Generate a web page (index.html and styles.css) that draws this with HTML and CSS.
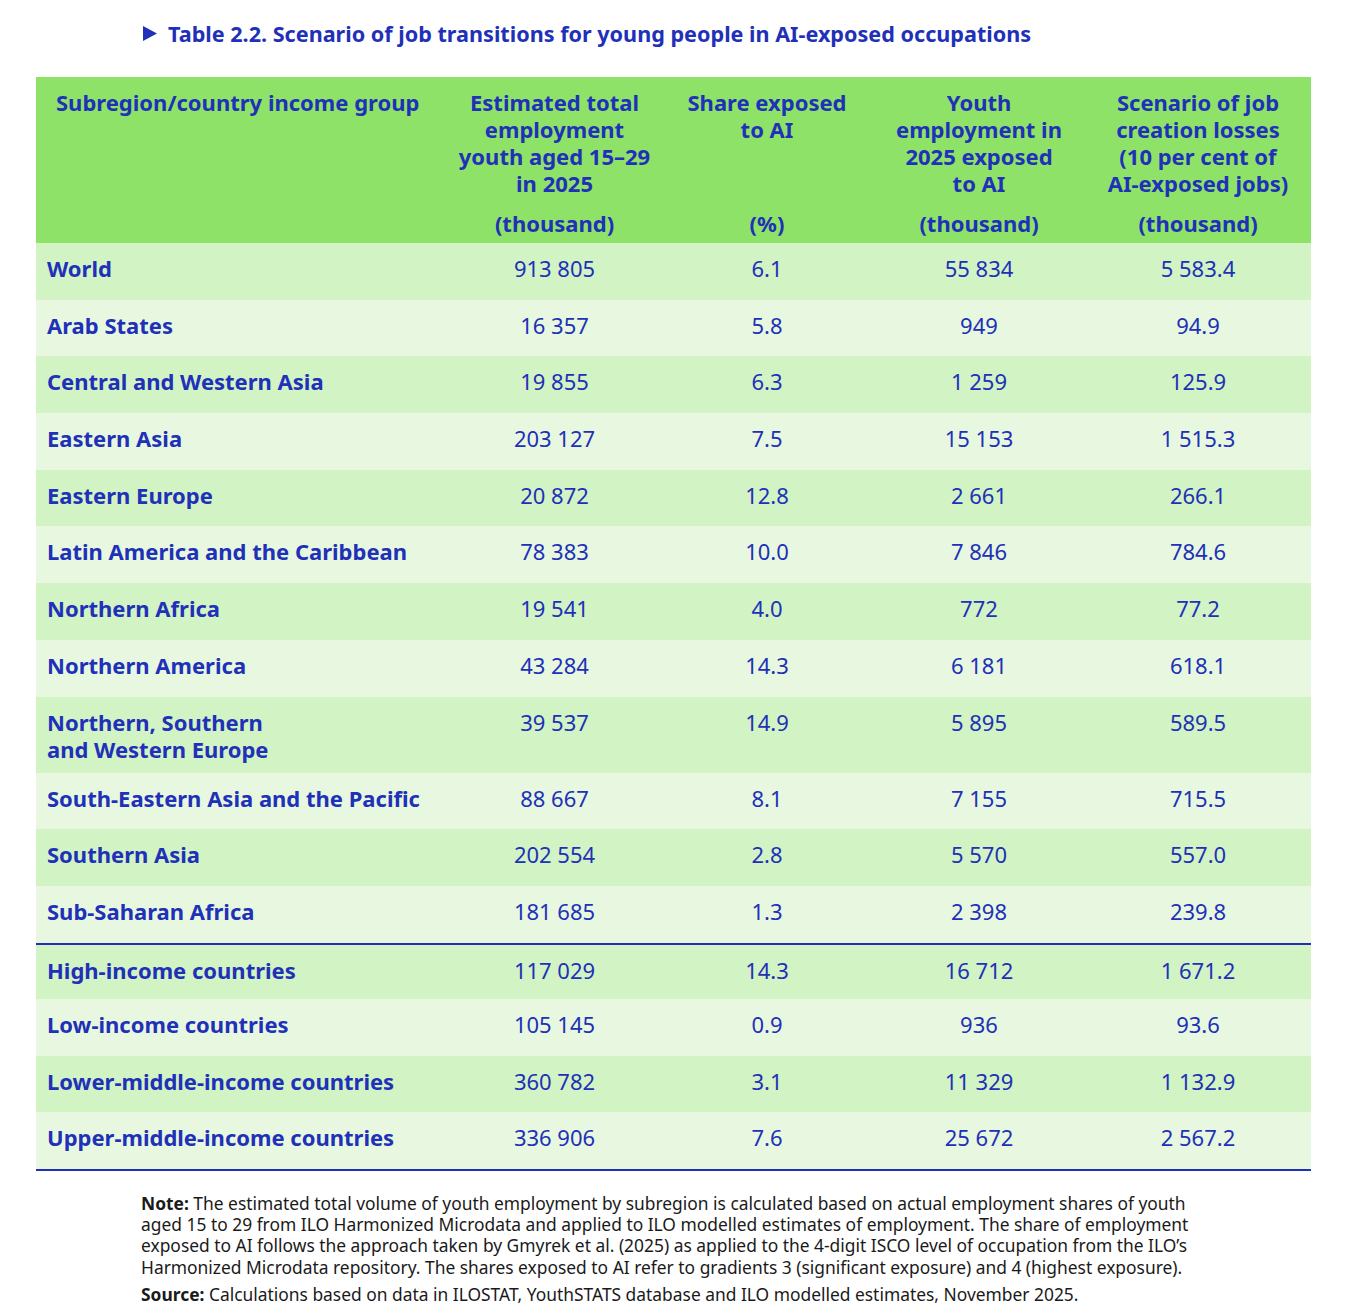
FILE: index.html
```html
<!DOCTYPE html>
<html lang="en">
<head>
<meta charset="utf-8">
<title>Table 2.2</title>
<link rel="stylesheet" href="styles.css">
</head>
<body>
<div class="page">
  <h1 class="title"><svg class="tri" width="14" height="15" viewBox="0 0 14 15"><polygon points="0,0 14,7.5 0,15" fill="#2130b8"/></svg>Table 2.2. Scenario of job transitions for young people in AI-exposed occupations</h1>
  <table class="data">
    <colgroup>
      <col class="c1"><col class="c2"><col class="c3"><col class="c4"><col class="c5">
    </colgroup>
    <thead>
      <tr>
        <th class="lab"><div class="hmain">Subregion/country income group</div></th>
        <th><div class="hmain">Estimated total<br>employment<br>youth aged 15–29<br>in 2025</div><div class="unit">(thousand)</div></th>
        <th><div class="hmain">Share exposed<br>to AI</div><div class="unit">(%)</div></th>
        <th><div class="hmain">Youth<br>employment in<br>2025 exposed<br>to AI</div><div class="unit">(thousand)</div></th>
        <th><div class="hmain">Scenario of job<br>creation losses<br>(10 per cent of<br>AI-exposed jobs)</div><div class="unit">(thousand)</div></th>
      </tr>
    </thead>
    <tbody>
      <tr class="d"><td class="lab">World</td><td>913 805</td><td>6.1</td><td>55 834</td><td>5 583.4</td></tr>
      <tr class="l"><td class="lab">Arab States</td><td>16 357</td><td>5.8</td><td>949</td><td>94.9</td></tr>
      <tr class="d"><td class="lab">Central and Western Asia</td><td>19 855</td><td>6.3</td><td>1 259</td><td>125.9</td></tr>
      <tr class="l"><td class="lab">Eastern Asia</td><td>203 127</td><td>7.5</td><td>15 153</td><td>1 515.3</td></tr>
      <tr class="d"><td class="lab">Eastern Europe</td><td>20 872</td><td>12.8</td><td>2 661</td><td>266.1</td></tr>
      <tr class="l"><td class="lab">Latin America and the Caribbean</td><td>78 383</td><td>10.0</td><td>7 846</td><td>784.6</td></tr>
      <tr class="d"><td class="lab">Northern Africa</td><td>19 541</td><td>4.0</td><td>772</td><td>77.2</td></tr>
      <tr class="l"><td class="lab">Northern America</td><td>43 284</td><td>14.3</td><td>6 181</td><td>618.1</td></tr>
      <tr class="d tall"><td class="lab">Northern, Southern<br>and Western Europe</td><td>39 537</td><td>14.9</td><td>5 895</td><td>589.5</td></tr>
      <tr class="l"><td class="lab">South-Eastern Asia and the Pacific</td><td>88 667</td><td>8.1</td><td>7 155</td><td>715.5</td></tr>
      <tr class="d"><td class="lab">Southern Asia</td><td>202 554</td><td>2.8</td><td>5 570</td><td>557.0</td></tr>
      <tr class="l"><td class="lab">Sub-Saharan Africa</td><td>181 685</td><td>1.3</td><td>2 398</td><td>239.8</td></tr>
      <tr class="d sep"><td class="lab">High-income countries</td><td>117 029</td><td>14.3</td><td>16 712</td><td>1 671.2</td></tr>
      <tr class="l"><td class="lab">Low-income countries</td><td>105 145</td><td>0.9</td><td>936</td><td>93.6</td></tr>
      <tr class="d"><td class="lab">Lower-middle-income countries</td><td>360 782</td><td>3.1</td><td>11 329</td><td>1 132.9</td></tr>
      <tr class="l last"><td class="lab">Upper-middle-income countries</td><td>336 906</td><td>7.6</td><td>25 672</td><td>2 567.2</td></tr>
    </tbody>
  </table>
  <div class="notes">
    <p class="note"><b>Note:</b> The estimated total volume of youth employment by subregion is calculated based on actual employment shares of youth<br>aged 15 to 29 from ILO Harmonized Microdata and applied to ILO modelled estimates of employment. The share of employment<br>exposed to AI follows the approach taken by Gmyrek et al. (2025) as applied to the 4-digit ISCO level of occupation from the ILO’s<br>Harmonized Microdata repository. The shares exposed to AI refer to gradients 3 (significant exposure) and 4 (highest exposure).</p>
    <p class="source"><b>Source:</b> Calculations based on data in ILOSTAT, YouthSTATS database and ILO modelled estimates, November 2025.</p>
  </div>
</div>
</body>
</html>
```
FILE: styles.css
```css
html, body {
  margin: 0;
  padding: 0;
  background: #ffffff;
}

.page {
  padding: 20px 0 0 36px;
  font-family: "Noto Sans", "Open Sans", sans-serif;
  color: #2130b8;
}

.title {
  margin: 0 0 30px 107px;
  font-size: 21.6px;
  line-height: 27px;
  font-weight: 700;
  color: #2130b8;
  display: flex;
  align-items: center;
}

.tri {
  margin-right: 11px;
  flex: none;
}

.data {
  width: 1275px;
  table-layout: fixed;
  border-collapse: collapse;
  font-size: 22px;
  line-height: 27px;
}

.c1 { width: 412px; }
.c2 { width: 213px; }
.c3 { width: 212px; }
.c4 { width: 212px; }
.c5 { width: 226px; }

.data thead th {
  background: #8ee268;
  font-weight: 700;
  text-align: center;
  vertical-align: top;
  padding: 12px 2px 5px;
  height: 149px;
}

.data thead th.lab {
  text-align: left;
  padding-left: 20px;
}

.hmain {
  height: 108px;
}

.unit {
  margin-top: 13px;
}

.data td {
  text-align: center;
  vertical-align: top;
  padding: 12px 8px 0;
  height: 44.7px;
  font-weight: 400;
}

.data td.lab {
  text-align: left;
  padding-left: 11px;
  font-weight: 700;
}

.data tr.tall td {
  height: 64px;
}

.d td { background: #d2f3c4; }
.l td { background: #e8f8e0; }

.sep td {
  border-top: 2px solid #2130b8;
  height: 42.5px;
}

.last td {
  border-bottom: 2px solid #2130b8;
}

.notes {
  margin: 21.5px 0 0 105px;
  color: #1a1a1a;
  font-size: 17.4px;
  line-height: 21.3px;
}

.notes p {
  margin: 0;
}

.notes .source {
  margin-top: 6px;
}
```
